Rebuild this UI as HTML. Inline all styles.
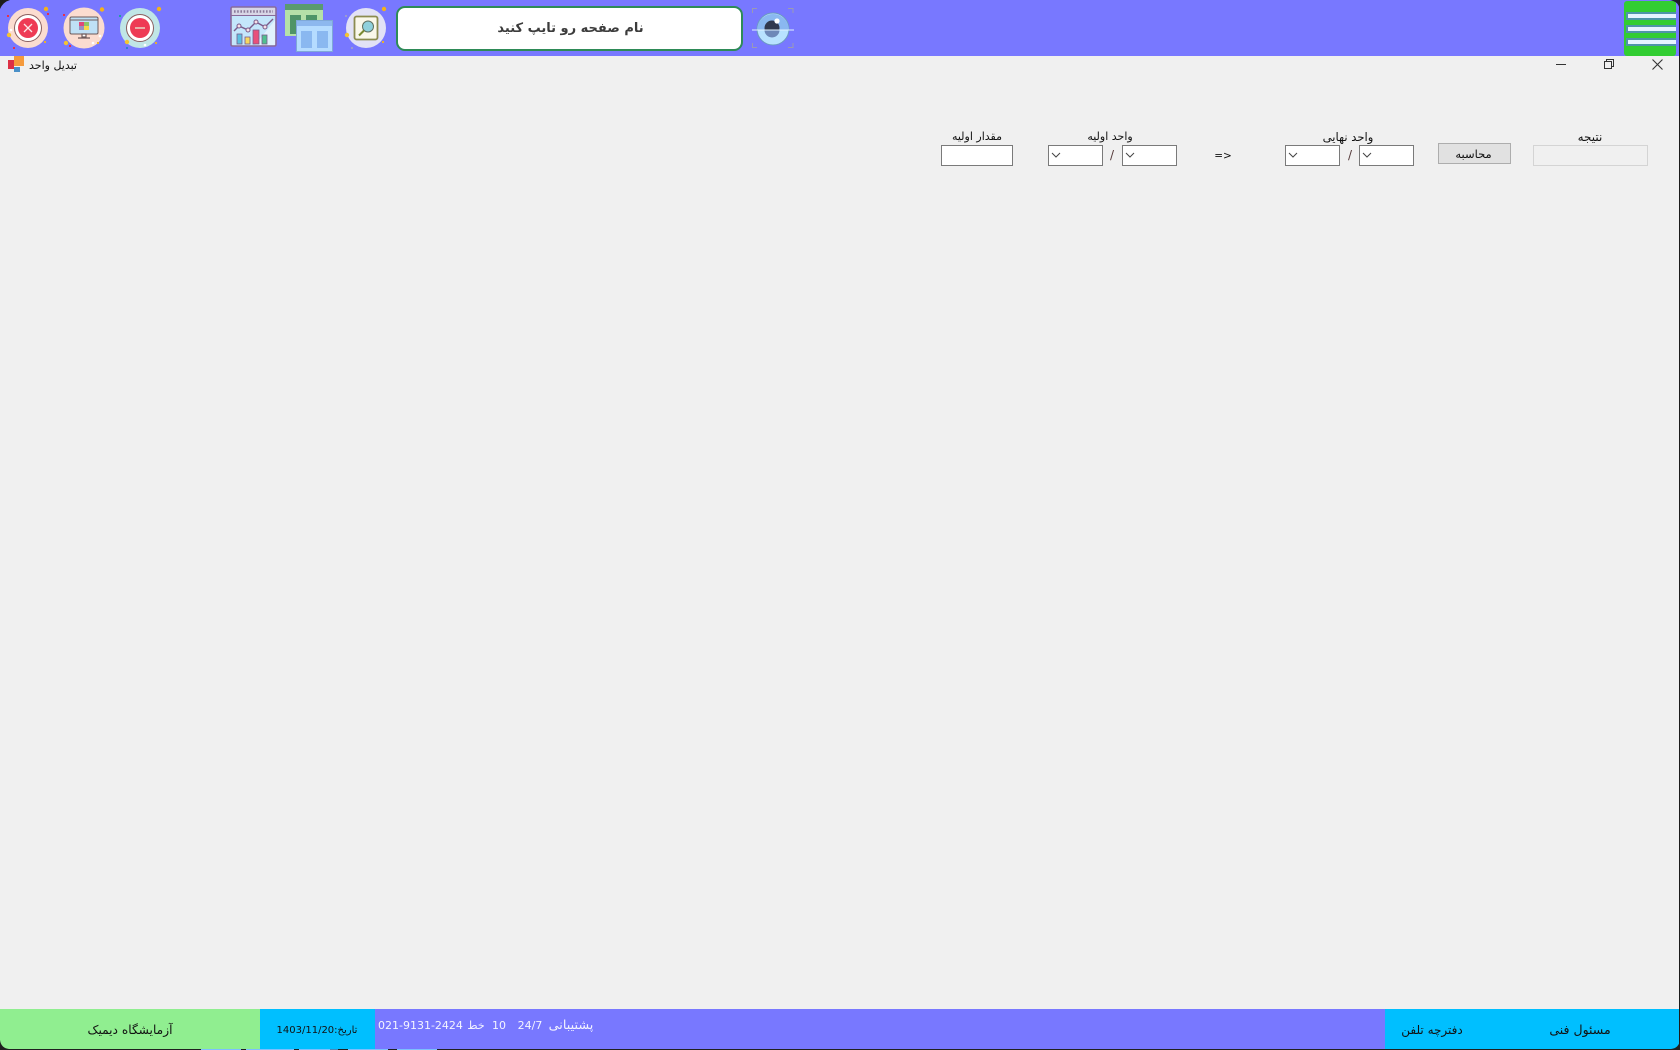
<!DOCTYPE html>
<html lang="fa"><head><meta charset="utf-8"><title>تبدیل واحد</title>
<style>
html,body{margin:0;padding:0;background:#f0f0f0}
#p{position:relative;width:1680px;height:1050px;overflow:hidden;background:#f0f0f0;font-family:"DejaVu Sans","Liberation Sans",sans-serif;color:#111}
#p div{position:absolute;box-sizing:border-box}
.t{white-space:nowrap;text-align:center;direction:rtl;line-height:16px;height:16px;font-size:11px}
.in{background:#fff;border:1px solid #7a7a7a;height:21px;top:145px}
.ch{position:absolute;left:2px;top:6px}
</style></head><body><div id="p">
<div style="left:0;top:0;width:1680px;height:56px;background:#7878ff"></div>

<svg style="position:absolute;left:0;top:0" width="400" height="56" viewBox="0 0 400 56">
<path d="M0 0H10Q3 2 0 9Z" fill="#1c1c1c"/>
<circle cx="28" cy="28" r="20" fill="#fbdcd0"/><circle cx="28" cy="28" r="13.5" fill="#fff" stroke="#8a6060" stroke-width="1"/><circle cx="28" cy="28" r="10" fill="#ee3b55"/>
<path d="M24 24L32 32M32 24L24 32" stroke="#fbe8e8" stroke-width="1.3"/>
<circle cx="46" cy="9" r="2.2" fill="#f4b21a"/><circle cx="9" cy="35" r="2.2" fill="#f4c430"/><circle cx="11" cy="30" r="1.3" fill="#fff"/><rect x="7" y="15" width="2" height="2" fill="#e8304a"/><rect x="47" y="13" width="2" height="2" fill="#e8304a"/><rect x="44" y="41" width="2" height="2" fill="#e8b030"/><rect x="13" y="47" width="2" height="2" fill="#e8304a"/>
<circle cx="84" cy="28" r="20.5" fill="#fbdcd0"/>
<rect x="70" y="17" width="28" height="17" rx="1.5" fill="#bfe0f5" stroke="#6d5a5a" stroke-width="1"/><path d="M70 20H98" stroke="#6d5a5a" stroke-width="1"/><rect x="79" y="22" width="5" height="4" fill="#e0487a"/><rect x="84" y="22" width="5" height="4" fill="#8cc46a"/><rect x="79" y="26" width="5" height="4" fill="#9a90c0"/><rect x="84" y="26" width="5" height="4" fill="#f6d84a"/>
<path d="M82 34h4v3h-4zM78 38h12" stroke="#6d5a5a" stroke-width="1.2" fill="#fff"/>
<circle cx="102" cy="9.5" r="2.2" fill="#f4b21a"/><circle cx="66" cy="43" r="2.2" fill="#f4c430"/><circle cx="100" cy="36" r="1.3" fill="#fff"/><circle cx="93" cy="43" r="1.3" fill="#fff"/><rect x="63" y="14" width="2" height="2" fill="#e8304a"/><rect x="69" y="45" width="2" height="2" fill="#e8304a"/><rect x="97" y="42" width="2" height="2" fill="#e8b030"/>
<circle cx="140" cy="28" r="20" fill="#c0e6e6"/><circle cx="140" cy="28" r="13.5" fill="#fff" stroke="#8a6060" stroke-width="1"/><circle cx="140" cy="28" r="10" fill="#ee3b55"/>
<rect x="135" y="27" width="10" height="2" fill="#e8b0a8"/>
<circle cx="159" cy="9" r="2.2" fill="#f4b21a"/><circle cx="127" cy="42" r="2.2" fill="#f4c430"/><circle cx="145" cy="45" r="1.3" fill="#fff"/><rect x="119" y="15" width="2" height="2" fill="#20a0a0"/><rect x="126" y="47" width="2" height="2" fill="#3080d0"/><rect x="155" y="42" width="2" height="2" fill="#e8b030"/>

<rect x="231" y="7" width="45" height="39" rx="1.5" fill="#c4e6fb" stroke="#8a6a9a" stroke-width="1.6"/>
<rect x="232" y="8" width="43" height="7" fill="#d8d6e6"/><path d="M234 11.5H273" stroke="#8a7a9a" stroke-width="2.4" stroke-dasharray="1.6 1.6"/><path d="M231 15.5H276" stroke="#8a6a9a" stroke-width="1"/>
<path d="M255 45L275 20V45Z" fill="#e2f2fd"/>
<path d="M234 31L239 26L248 30L256 22L265 27L273 19" fill="none" stroke="#7a5a8a" stroke-width="1.4"/>
<circle cx="239" cy="26" r="2" fill="#f6e0e6" stroke="#7a5a8a"/><circle cx="248" cy="30" r="2" fill="#f6e0e6" stroke="#7a5a8a"/><circle cx="256" cy="22" r="2" fill="#f6e0e6" stroke="#7a5a8a"/><circle cx="265" cy="27" r="2" fill="#f6e0e6" stroke="#7a5a8a"/>
<rect x="237" y="34" width="5" height="10" fill="#5cc0e0" stroke="#7a5a8a" stroke-width=".8"/><rect x="245" y="37" width="5" height="7" fill="#f6d860" stroke="#7a5a8a" stroke-width=".8"/><rect x="253" y="30" width="6" height="14" fill="#e8507a" stroke="#7a5a8a" stroke-width=".8"/><rect x="262" y="35" width="5" height="9" fill="#50c090" stroke="#7a5a8a" stroke-width=".8"/>

<rect x="285" y="4" width="38" height="32" fill="#b5e0a8"/><rect x="285" y="4" width="38" height="6" fill="#5a9a70"/><rect x="290" y="15" width="11" height="19" fill="#4f9468"/><rect x="306" y="15" width="11" height="19" fill="#4f9468"/>
<rect x="296.5" y="20.5" width="36" height="31" fill="#b5dcff" stroke="#7fa8d8"/><rect x="297" y="21" width="35" height="5" fill="#8db8ee"/><rect x="301" y="31" width="11" height="17" fill="#8ab8f0"/><rect x="317" y="31" width="11" height="17" fill="#8ab8f0"/>

<circle cx="366" cy="28" r="20" fill="#e2e2f6"/><rect x="354.5" y="16.5" width="23" height="23" rx="2" fill="#faf8ea" stroke="#8c8c50" stroke-width="1.8"/>
<circle cx="368" cy="26.500" r="5.500" fill="#8fd0dc" stroke="#607060" stroke-width="1"/><path d="M364 30.500L359 35.500" stroke="#7a8a30" stroke-width="2"/>
<circle cx="384" cy="9" r="2.2" fill="#f4b21a"/><circle cx="347" cy="35" r="2.2" fill="#f4c430"/><rect x="345" y="15" width="2" height="2" fill="#9a9ad0"/><rect x="382" y="41" width="2" height="2" fill="#e8b030"/><rect x="351" y="47" width="2" height="2" fill="#9a9ad0"/>
</svg>

<div style="left:396px;top:6px;width:347px;height:45px;background:#fff;border:2px solid #2e8b57;border-radius:9px"></div>
<div class="t" style="left:397px;top:19px;width:347px;height:20px;line-height:20px;font-size:13px;color:#3c3c3c;font-weight:bold">نام صفحه رو تایپ کنید</div>

<svg style="position:absolute;left:750px;top:6px" width="46" height="44" viewBox="0 0 46 44">
<path d="M2.500 7V2.500H7M38 2.500H43V7M2.500 37V41.500H7M38 41.500H43V37" fill="none" stroke="#9a9ab4" stroke-width="1"/>
<circle cx="23" cy="23" r="16" fill="#b8e2ff" stroke="#6a9ac0"/><path d="M7 24A16 16 0 0 1 39 24Z" fill="#8ab8f0"/>
<circle cx="22" cy="22" r="7.500" fill="#30384e"/><path d="M14.500 24A7.500 7.500 0 0 0 29.500 24Z" fill="#6d88b8"/><circle cx="27" cy="15" r="2.600" fill="#fff"/>
<path d="M2 24H44" stroke="#dff2ff" stroke-width="1"/>
</svg>

<div style="left:1624px;top:1px;width:52px;height:55px;background:#32cd32;border-radius:3px"></div>
<div style="left:1626px;top:12px;width:50px;height:8px;background:#e6f3ff;border:2px solid #4f94a8;border-right:0"></div>
<div style="left:1626px;top:25px;width:50px;height:8px;background:#e6f3ff;border:2px solid #4f94a8;border-right:0"></div>
<div style="left:1626px;top:38px;width:50px;height:8px;background:#e6f3ff;border:2px solid #4f94a8;border-right:0"></div>
<svg style="position:absolute;left:1666px;top:0" width="14" height="12" viewBox="0 0 14 12"><path d="M4 0H14V12H13V7Q12 2 4 0Z" fill="#1c2030"/></svg>

<div style="left:1679px;top:0;width:1px;height:1050px;background:#1c1c1c"></div>

<div style="left:8px;top:60px;width:6px;height:9px;background:#dc3045"></div>
<div style="left:14px;top:56px;width:10px;height:10px;background:#f59a3c"></div>
<div style="left:14px;top:67px;width:6px;height:5px;background:#4a90c8"></div>
<div class="t" style="left:24px;top:58px;width:58px;font-size:11px">تبدیل واحد</div>

<svg style="position:absolute;left:1550px;top:56px" width="120" height="18" viewBox="0 0 120 18">
<path d="M6 8.500H16" stroke="#333" stroke-width="1"/>
<path d="M54.500 5.500h7v7h-7zM56.500 5.500v-2h7v7h-2" fill="none" stroke="#333" stroke-width="1"/>
<path d="M102.500 3.500L112.500 13.500M112.500 3.500L102.500 13.500" stroke="#333" stroke-width="1.100"/>
</svg>

<div class="t" style="left:1550px;top:129px;width:80px;font-size:12px">نتیجه</div>
<div class="t" style="left:1298px;top:129px;width:100px;font-size:11.600px">واحد نهایی</div>
<div class="t" style="left:1060px;top:129px;width:100px">واحد اولیه</div>
<div class="t" style="left:927px;top:129px;width:100px">مقدار اولیه</div>

<div class="in" style="left:1533px;width:115px;background:#f0f0f0;border:1px solid #d4d4d4;"></div>
<div style="left:1438px;top:143px;width:73px;height:21px;background:#e1e1e1;border:1px solid #adadad"></div>
<div class="t" style="left:1437px;top:146px;width:73px;font-size:11.500px">محاسبه</div>

<div class="in" style="left:1359px;width:55px"><svg class="ch" width="10" height="6"><path d="M1 1L5 5L9 1" fill="none" stroke="#444"/></svg></div>
<div class="t" style="left:1340px;top:147px;width:20px;direction:ltr;font-size:12px;color:#553a3a">/</div>
<div class="in" style="left:1285px;width:55px"><svg class="ch" width="10" height="6"><path d="M1 1L5 5L9 1" fill="none" stroke="#444"/></svg></div>
<div class="t" style="left:1203px;top:148px;width:40px;direction:ltr;font-size:10.500px">=&gt;</div>
<div class="in" style="left:1122px;width:55px"><svg class="ch" width="10" height="6"><path d="M1 1L5 5L9 1" fill="none" stroke="#444"/></svg></div>
<div class="t" style="left:1102px;top:147px;width:20px;direction:ltr;font-size:12px;color:#553a3a">/</div>
<div class="in" style="left:1048px;width:55px"><svg class="ch" width="10" height="6"><path d="M1 1L5 5L9 1" fill="none" stroke="#444"/></svg></div>
<div class="in" style="left:941px;width:72px"></div>

<div style="left:0;top:1009px;width:260px;height:40px;background:#90ee90"></div>
<div style="left:260px;top:1009px;width:115px;height:40px;background:#00bfff"></div>
<div style="left:375px;top:1009px;width:1010px;height:40px;background:#7878ff"></div>
<div style="left:1385px;top:1009px;width:294px;height:40px;background:#00bfff"></div>

<div class="t" style="left:60px;top:1022px;width:140px;font-size:12.200px">آزمایشگاه دیمیک</div>
<div class="t" style="left:262px;top:1023px;width:110px;font-size:10px">تاریخ:1403/11/20</div>
<div class="t" style="left:378px;top:1018px;width:86px;font-size:11px;color:#f4f4ff;direction:ltr;text-align:left">021-9131-2424</div>
<div class="t" style="left:466px;top:1018px;width:20px;font-size:11px;color:#f4f4ff">خط</div>
<div class="t" style="left:489px;top:1018px;width:20px;font-size:11px;color:#f4f4ff;direction:ltr">10</div>
<div class="t" style="left:515px;top:1018px;width:30px;font-size:11px;color:#f4f4ff;direction:ltr">24/7</div>
<div class="t" style="left:541px;top:1018px;width:60px;font-size:12.800px;color:#f4f4ff">پشتیبانی</div>
<div class="t" style="left:1392px;top:1022px;width:80px;font-size:12px">دفترچه تلفن</div>
<div class="t" style="left:1540px;top:1022px;width:80px;font-size:12.500px">مسئول فنی</div>

<div style="left:0;top:1049px;width:1680px;height:1px;background:#202020"></div>
<div style="left:201px;top:1049px;width:40px;height:1px;background:#7cc0ff"></div>
<div style="left:246px;top:1049px;width:48px;height:1px;background:#7cc0ff"></div>
<div style="left:299px;top:1049px;width:31px;height:1px;background:#7cc0ff"></div>
<div style="left:330px;top:1049px;width:8px;height:1px;background:#4a88b8"></div>
<div style="left:348px;top:1049px;width:40px;height:1px;background:#7cc0ff"></div>
<div style="left:397px;top:1049px;width:40px;height:1px;background:#7cc0ff"></div>
<svg style="position:absolute;left:0;top:1040px" width="10" height="10"><path d="M0 0Q1 8 9 9V10H0Z" fill="#202020"/></svg>
<svg style="position:absolute;left:1670px;top:1040px" width="10" height="10"><path d="M10 0Q9 8 1 9V10H10Z" fill="#202020"/></svg>
</div></body></html>
